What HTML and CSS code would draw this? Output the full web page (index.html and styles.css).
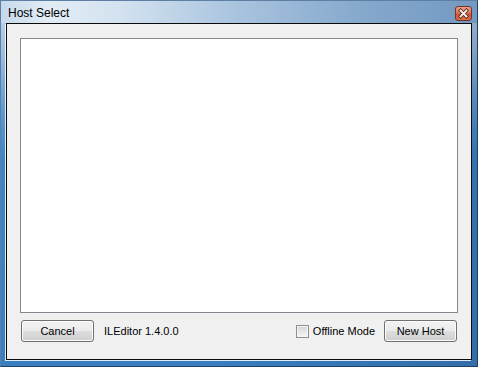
FILE: index.html
```html
<!DOCTYPE html>
<html lang="en">
<head>
    <meta charset="UTF-8">
    <title>Host Select</title>
    <link rel="stylesheet" href="styles.css">
</head>
<body>
    <div class="window">
        <div class="titlebar">
            <span class="title">Host Select</span>
            <a href="#" class="close-btn">
                <svg width="17" height="15" viewBox="0 0 17 15">
                    <defs>
                        <linearGradient id="red" x1="0" y1="0" x2="0" y2="1">
                            <stop offset="0" stop-color="#eaa690"/>
                            <stop offset="0.45" stop-color="#d9765a"/>
                            <stop offset="0.55" stop-color="#c9532f"/>
                            <stop offset="1" stop-color="#d8744e"/>
                        </linearGradient>
                    </defs>
                    <rect x="0.5" y="0.5" width="16" height="14" rx="2.5" fill="url(#red)" stroke="#7a3220"/>
                    <path d="M5.5 4.5 L11.5 10.5 M11.5 4.5 L5.5 10.5" stroke="#5a2416" stroke-width="3.4" stroke-linecap="square"/>
                    <path d="M5.5 4.5 L11.5 10.5 M11.5 4.5 L5.5 10.5" stroke="#f4f4f4" stroke-width="1.8" stroke-linecap="square"/>
                </svg>
            </a>
        </div>

        <!-- zone client de la fenetre -->
        <div class="client">
            <div class="host-list"></div>
            <div class="bottom-bar">
                <button class="btn">Cancel</button>
                <span class="version">ILEditor 1.4.0.0</span>
                <label class="offline">
                    <span class="checkbox"></span>
                    Offline Mode
                </label>
                <button class="btn">New Host</button>
            </div>
        </div>
    </div>
</body>
</html>
```

FILE: styles.css
```css
/* fenetre style Windows 7 */
body {
    margin: 0;
    padding: 0;
    font-family: "Liberation Sans", Arial, sans-serif;
    background-color: #ffffff;
}

* {
    box-sizing: border-box;
}

.window {
    width: 478px;
    height: 367px;
    display: flex;
    flex-direction: column;
    border: 1px solid #5d7fa4;
    border-right-color: #22405f;
    border-bottom-color: #22405f;
    background:
        linear-gradient(to right, rgba(255, 255, 255, 0) 40%, rgba(20, 50, 90, 0.22) 100%),
        linear-gradient(to bottom, #c3d8ee 0, #a4c2e2 45px, #5c9ad3 110px, #3c85c6 160px, #3a7fc1 100%);
}

.titlebar {
    height: 22px;
    display: flex;
    align-items: center;
    justify-content: space-between;
    padding: 0 5px 0 7px;
    background: linear-gradient(to right, #c6d9ec 0%, #e2ecf5 10%, #d3e2f0 25%, #a8c3de 50%, #86a9cd 75%, #7399c2 100%);
}

.title {
    font-size: 12px;
    color: #000000;
    padding-top: 1px;
}

.close-btn {
    display: block;
    width: 17px;
    height: 15px;
    margin-top: 3px;
}

.close-btn svg {
    display: block;
}

.client {
    flex: 1;
    margin: 0 5px 6px 5px;
    display: flex;
    flex-direction: column;
    padding: 14px 13px 0 13px;
    background-color: #f0f0f0;
    border: 1px solid #0a0a0a;
    box-shadow: -1px 1px 0 0 rgba(255, 255, 255, 0.85);
}

.host-list {
    height: 275px;
    background-color: #ffffff;
    border: 1px solid #828790;
}

.bottom-bar {
    display: flex;
    align-items: center;
    margin-top: 7px;
    padding: 0 1px;
    height: 22px;
    font-size: 11px;
    color: #000000;
}

.btn {
    width: 73px;
    height: 22px;
    font-family: "Liberation Sans", Arial, sans-serif;
    font-size: 11px;
    color: #000000;
    border: 1px solid #707070;
    border-radius: 3px;
    box-shadow: inset 0 0 0 1px #fbfbfb;
    background: linear-gradient(to bottom, #f2f2f2 0%, #ebebeb 50%, #dddddd 51%, #cfcfcf 100%);
    padding: 0;
}

.version {
    margin-left: 10px;
    flex: 1;
}

.offline {
    display: flex;
    align-items: center;
    margin-right: 9px;
}

.checkbox {
    width: 13px;
    height: 13px;
    margin-right: 4px;
    border: 1px solid #8e8f8f;
    box-shadow: inset 0 0 0 1px #f4f4f4;
    background: linear-gradient(to bottom, #d4d4d4, #f7f7f7);
}
```
